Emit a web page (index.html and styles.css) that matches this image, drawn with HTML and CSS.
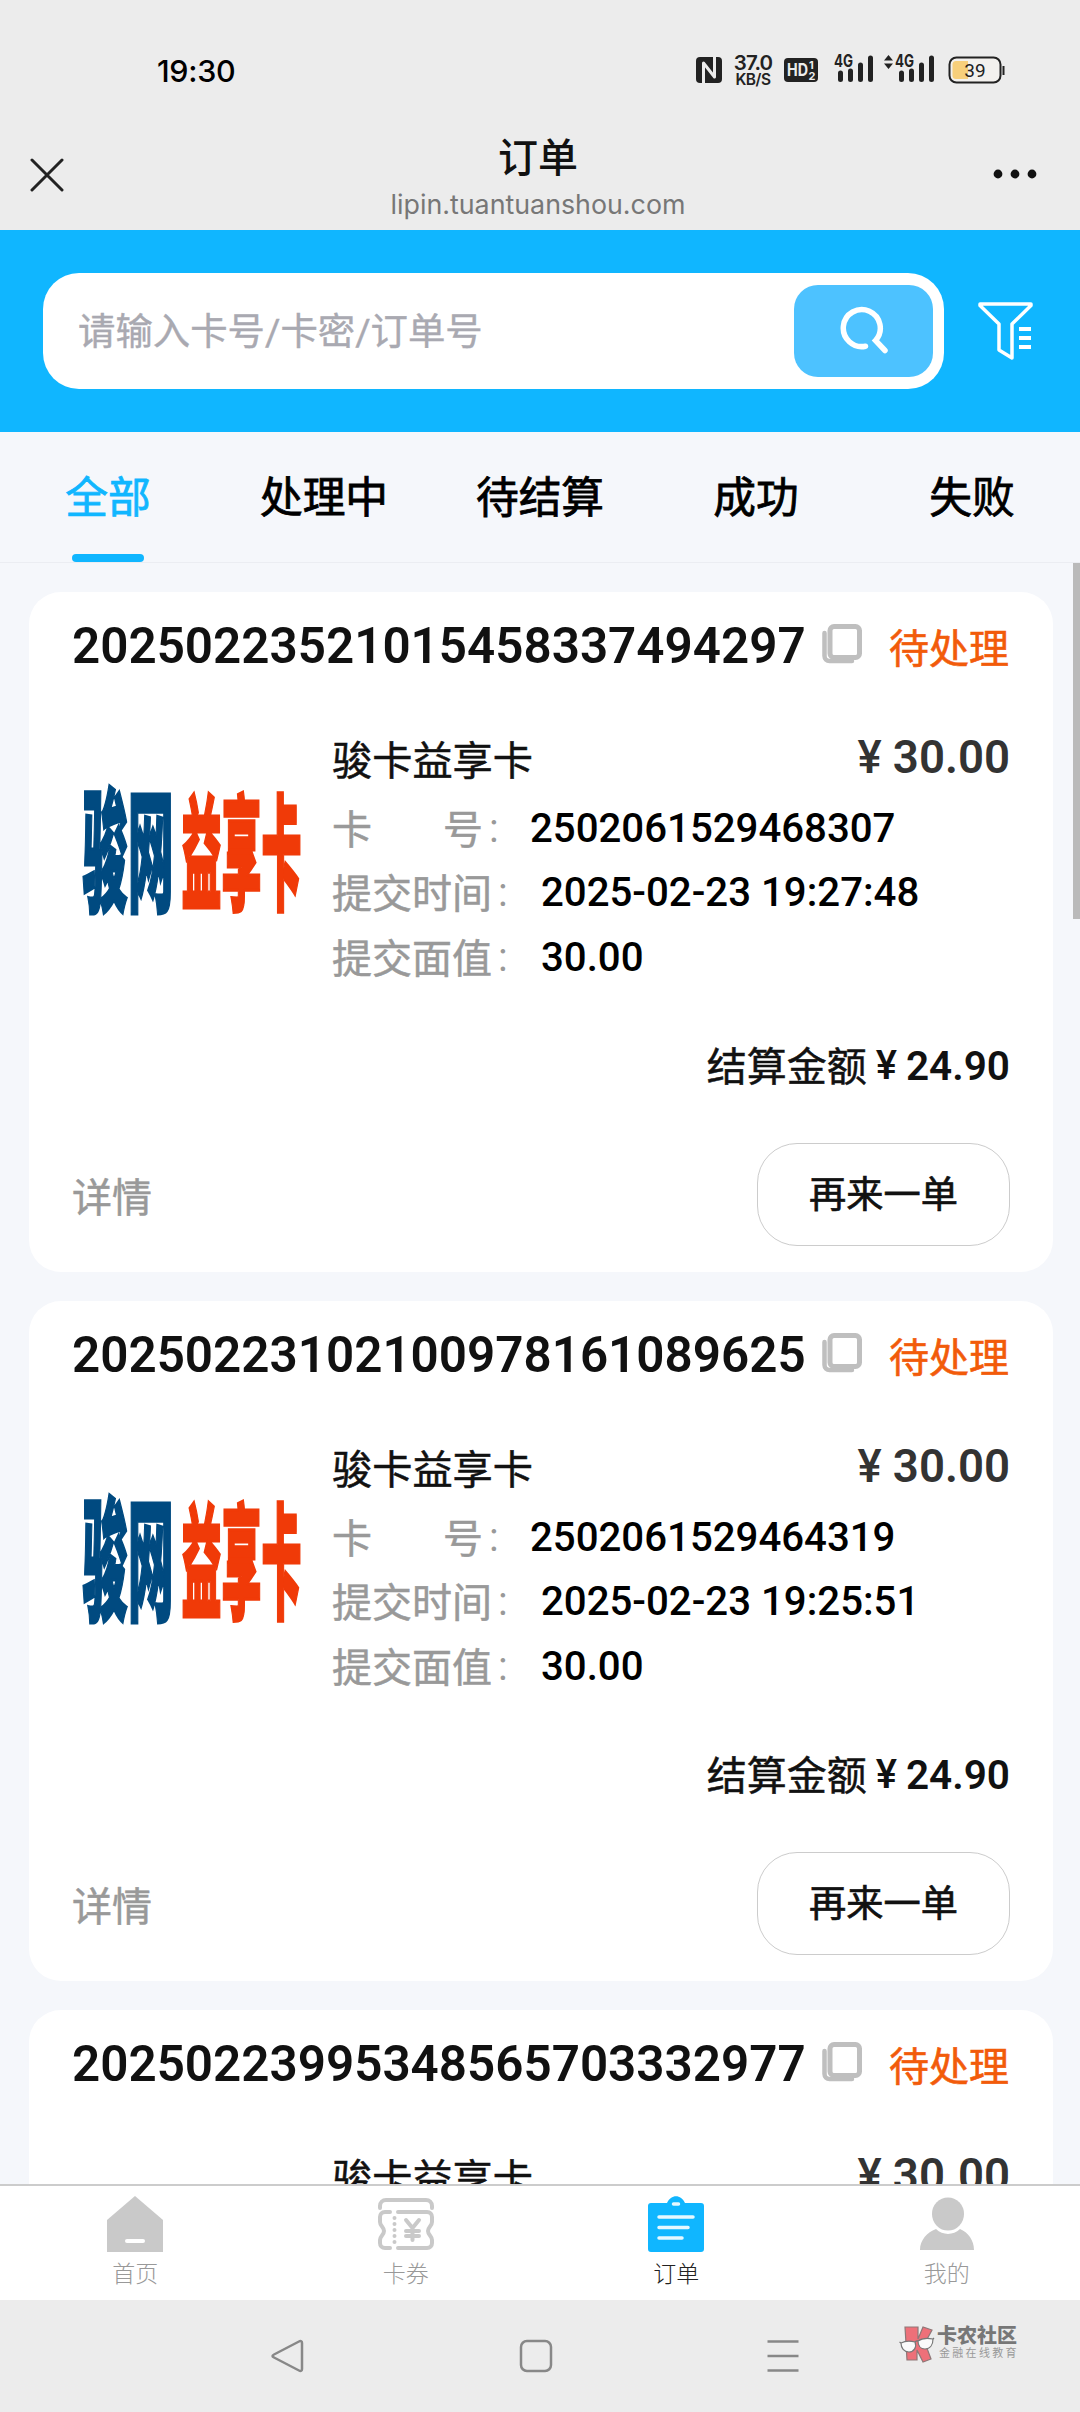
FILE: index.html
```html
<!DOCTYPE html>
<html lang="zh-CN">
<head>
<meta charset="utf-8">
<title>订单</title>
<link rel="stylesheet" href="styles.css">
</head>
<body>
<svg class="defs" aria-hidden="true">
  <symbol id="copy" viewBox="0 0 40 40">
    <rect x="8" y="2.5" width="29.5" height="31" rx="4" fill="none" stroke="#bfbfbf" stroke-width="5"/>
    <path d="M2.5 9v23a5 5 0 0 0 5 5H30" fill="none" stroke="#bfbfbf" stroke-width="4.5" stroke-linecap="round"/>
  </symbol>
  <symbol id="brand" viewBox="0 0 236 160">
    <g class="brand-text">
      <text transform="translate(10.5 129) scale(1 3.02)" textLength="91" lengthAdjust="spacingAndGlyphs" font-size="44" fill="#004a80" stroke="#004a80">骏网</text>
      <text transform="translate(109.500 127.500) scale(1 3.12)" textLength="120" lengthAdjust="spacingAndGlyphs" font-size="40" fill="#f03a08" stroke="#f03a08">益享卡</text>
    </g>
  </symbol>
</svg>
<div class="screen">
  <header class="statusbar">
    <span class="clock">19:30</span>
    <div class="indicators">
      <svg class="ind-nfc" width="28" height="28" viewBox="0 0 28 28"><rect x="1" y="1" width="26" height="26" rx="4" fill="#222"/><path d="M8.500 27V7l11 14V1" fill="none" stroke="#ececec" stroke-width="3" stroke-linejoin="round"/></svg>
      <div class="speed"><b>37.0</b><i>KB/S</i></div>
      <svg class="ind-hd" width="36" height="26" viewBox="0 0 36 26"><rect x="1" y="1" width="34" height="24" rx="4" fill="#222"/><g fill="#ececec" font-weight="700"><text x="4" y="19" font-size="17" textLength="21" lengthAdjust="spacingAndGlyphs">HD</text><text x="26" y="12" font-size="11">1</text><text x="25.500" y="23" font-size="11">2</text></g></svg>
      <svg class="ind-sig" width="42" height="32" viewBox="0 0 42 32"><text x="1" y="15" font-size="17" font-weight="700" textLength="19" lengthAdjust="spacingAndGlyphs" fill="#222">4G</text><g stroke="#222" stroke-width="5" stroke-linecap="round"><path d="M7.500 21v6.500M17.500 19v8.500M27.500 13v14.500M37.500 6v21.500"/></g></svg>
      <svg class="ind-sig2" width="52" height="32" viewBox="0 0 52 32"><path d="M0 8.500l4.500-5.500 4.500 5.500zM0 11.500l4.500 5.500 4.500-5.500z" fill="#222"/><text x="11" y="15" font-size="17" font-weight="700" textLength="19" lengthAdjust="spacingAndGlyphs" fill="#222">4G</text><g stroke="#222" stroke-width="5" stroke-linecap="round"><path d="M17.500 21v6.500M27.500 19v8.500M37.500 13v14.500M47.500 6v21.500"/></g></svg>
      <svg class="ind-bat" width="58" height="28" viewBox="0 0 58 28"><rect x="1.500" y="1.500" width="51" height="25" rx="7" fill="#f3f1ee" stroke="#222" stroke-width="2"/><path d="M8 5h12v18H8a3.500 3.500 0 0 1-3.500-3.500v-11A3.500 3.500 0 0 1 8 5z" fill="#f7cf7b"/><path d="M55.500 10v9" stroke="#222" stroke-width="2"/><text x="27" y="20.500" font-size="19" text-anchor="middle" fill="#222" font-family="Roboto">39</text></svg>
    </div>
  </header>

  <div class="titlebar">
    <svg class="close" width="34" height="34" viewBox="0 0 34 34"><path d="M2 2l30 30M32 2L2 32" stroke="#222" stroke-width="3" stroke-linecap="round"/></svg>
    <div class="page-title"><h1>订单</h1><p>lipin.tuantuanshou.com</p></div>
    <svg class="more" width="44" height="12" viewBox="0 0 44 12" fill="#111"><circle cx="5" cy="6" r="4.400"/><circle cx="22" cy="6" r="4.400"/><circle cx="39" cy="6" r="4.400"/></svg>
  </div>

  <div class="searchbar">
    <div class="searchbox">
      <span class="placeholder">请输入卡号/卡密/订单号</span>
      <div class="search-btn"><svg width="50" height="50" viewBox="0 0 50 50" fill="none" stroke="#fff" stroke-width="5.500" stroke-linecap="round"><path d="M26.500 42.200A18.500 18.500 0 1 1 36.500 36.500l9.500 10"/></svg></div>
    </div>
    <svg class="filter" width="56" height="60" viewBox="0 0 56 60" fill="none" stroke="#fff" stroke-width="3.500" stroke-linejoin="round"><path d="M2 3h51v1.500L34 23v34l-13-8V23L2 4.500z"/><path d="M41 28h12M41 37h12M41 46h12" stroke-width="4"/></svg>
  </div>

  <nav class="tabs">
    <span class="tab active">全部</span><span class="tab">处理中</span><span class="tab">待结算</span><span class="tab">成功</span><span class="tab">失败</span>
  </nav>

  <main class="orders">
    <article class="card">
      <div class="card-head"><h2>20250223521015458337494297</h2><svg class="copy"><use href="#copy"/></svg><span class="state">待处理</span></div>
      <div class="card-body">
        <svg class="brand"><use href="#brand"/></svg>
        <div class="info">
          <div class="product"><span>骏卡益享卡</span><strong class="price"><span class="yen">¥</span>30.00</strong></div>
          <div class="field"><span class="label split"><span>卡</span><span>号</span></span><span class="colon">:</span><span class="value">2502061529468307</span></div>
          <div class="field"><span class="label">提交时间</span><span class="colon">:</span><span class="value">2025-02-23 19:27:48</span></div>
          <div class="field"><span class="label">提交面值</span><span class="colon">:</span><span class="value">30.00</span></div>
        </div>
      </div>
      <div class="settle"><span>结算金额</span><span class="yen">¥</span><b>24.90</b></div>
      <div class="card-foot"><span class="detail">详情</span><span class="again">再来一单</span></div>
    </article>
    <article class="card">
      <div class="card-head"><h2>20250223102100978161089625</h2><svg class="copy"><use href="#copy"/></svg><span class="state">待处理</span></div>
      <div class="card-body">
        <svg class="brand"><use href="#brand"/></svg>
        <div class="info">
          <div class="product"><span>骏卡益享卡</span><strong class="price"><span class="yen">¥</span>30.00</strong></div>
          <div class="field"><span class="label split"><span>卡</span><span>号</span></span><span class="colon">:</span><span class="value">2502061529464319</span></div>
          <div class="field"><span class="label">提交时间</span><span class="colon">:</span><span class="value">2025-02-23 19:25:51</span></div>
          <div class="field"><span class="label">提交面值</span><span class="colon">:</span><span class="value">30.00</span></div>
        </div>
      </div>
      <div class="settle"><span>结算金额</span><span class="yen">¥</span><b>24.90</b></div>
      <div class="card-foot"><span class="detail">详情</span><span class="again">再来一单</span></div>
    </article>
    <article class="card">
      <div class="card-head"><h2>20250223995348565703332977</h2><svg class="copy"><use href="#copy"/></svg><span class="state">待处理</span></div>
      <div class="card-body">
        <div class="brand"></div>
        <div class="info">
          <div class="product"><span>骏卡益享卡</span><strong class="price"><span class="yen">¥</span>30.00</strong></div>
        </div>
      </div>
    </article>
    <div class="scrollbar"></div>
  </main>

  <nav class="tabbar">
    <div class="item"><svg width="58" height="58" viewBox="0 0 58 58"><path d="M29 1l28 24v32H1V25z" fill="#c9c9c9"/><path d="M21 46h16" stroke="#fff" stroke-width="4" stroke-linecap="round"/></svg><span>首页</span></div>
    <div class="item"><svg width="58" height="58" viewBox="0 0 58 58" fill="none" stroke="#c9c9c9" stroke-width="4" stroke-linecap="round" stroke-linejoin="round"><path d="M3 13V11a6 6 0 0 1 6-6h40a6 6 0 0 1 6 6v2"/><path d="M13 17H8c-3 0-5 2-5 5v5c0 4 4 5 4 9s-4 5-4 9v3c0 3 2 5 5 5h5M21 17h29c3 0 5 2 5 5v5c0 4-4 5-4 9s4 5 4 9v3c0 3-2 5-5 5H21"/><path d="M17.500 23v.1M17.500 29v.1M17.500 35v.1M17.500 41v.1M17.500 47v.1M29 25l6.500 8 6.500-8M35.500 34v11M29 36h13M29 41h13"/></svg><span>卡券</span></div>
    <div class="item on"><svg width="58" height="58" viewBox="0 0 58 58"><path d="M4 8h16c4-9 14-9 18 0h16a3 3 0 0 1 3 3v43a3 3 0 0 1-3 3H4a3 3 0 0 1-3-3V11a3 3 0 0 1 3-3z" fill="#10b6ff"/><path d="M26.500 9h5M12 22h34M12 32.500h29M12 43h23" stroke="#e6f8ff" stroke-width="3.500" stroke-linecap="round"/></svg><span>订单</span></div>
    <div class="item"><svg width="58" height="58" viewBox="0 0 58 58" fill="#c9c9c9"><ellipse cx="30" cy="19" rx="16" ry="16.500"/><path d="M18 34c7 6.500 17 6.500 24 0 8 3.500 14 11 14 21H2c0-10 7-17.500 16-21z"/></svg><span>我的</span></div>
  </nav>

  <footer class="sysnav">
    <svg class="sys back" width="34" height="34" viewBox="0 0 34 34"><path d="M29 2.500c2-1 3 0 3 1.500v26c0 1.500-1 2.500-3 1.500L4 18.500c-2-1-2-2 0-3z"/></svg>
    <svg class="sys home" width="34" height="34" viewBox="0 0 34 34"><rect x="2" y="2" width="30" height="30" rx="6"/></svg>
    <svg class="sys menu" width="34" height="34" viewBox="0 0 34 34"><path d="M1.500 2.500h31M1.500 17h31M1.500 31.500h31"/></svg>
    <div class="mark">
      <svg width="36" height="38" viewBox="0 0 36 38"><path d="M6 2h13v12l5-12 9 3-7 13 6 16-8 3-6-12v10H8z" fill="#ee7079" stroke="#8f7777" stroke-width="1.200"/><g fill="#fafafa" stroke="#777" stroke-width="1.200"><path d="M2 18c4-2 10-2 14-1 2 5-1 10-6 10s-8-4-8-9z"/><path d="M19 16c4-3 10-3 15-2 0 6-3 10-8 10s-7-4-7-8z"/><path d="M16 17q1.500-1.500 3-1M2 18l-1.500-1M34 14l1-1" fill="none"/></g></svg>
      <div class="mark-text"><b>卡农社区</b><span>金融在线教育</span></div>
    </div>
  </footer>
</div>
</body>
</html>
```
FILE: styles.css
```css
* { box-sizing: border-box; margin: 0; padding: 0; }
body { width: 1080px; height: 2412px; overflow: hidden; background: #ececec; font-family: Roboto, "Noto Sans CJK SC", sans-serif; color: #000; }
svg { display: block; flex: none; }
.defs { position: absolute; width: 0; height: 0; }
.screen { display: flex; flex-direction: column; width: 1080px; height: 2412px; white-space: nowrap; }

.statusbar { height: 118px; padding: 22px 74px 0 157px; display: flex; align-items: center; justify-content: space-between; font-family: Inter, sans-serif; }
.clock { font-size: 30.5px; font-weight: 500; letter-spacing: -0.3px; }
.indicators { display: flex; align-items: center; color: #222; }
.speed { width: 38px; margin: 2px 11px 0 11px; display: flex; flex-direction: column; align-items: center; line-height: 17px; }
.speed b { font-size: 20.5px; font-weight: 600; letter-spacing: -0.8px; }
.speed i { font-size: 15.5px; font-weight: 600; font-style: normal; letter-spacing: -0.5px; }
.ind-hd { margin-right: 14px; }
.ind-sig, .ind-sig2 { margin-top: -5px; }
.ind-sig2 { margin: -5px 12px 0 9px; }

.titlebar { height: 112px; padding: 0 43px 0 30px; display: flex; align-items: flex-start; justify-content: space-between; }
.close { margin-top: 40px; }
.more { margin-top: 50px; }
.page-title { text-align: center; margin-left: 19px; }
.page-title h1 { font-size: 40px; line-height: 58px; font-weight: 500; margin-top: 12px; color: #111; }
.page-title p { font-family: Inter, sans-serif; font-size: 26.8px; line-height: 32px; color: #777; }

.searchbar { height: 202px; background: #10b6ff; padding: 0 46px 0 43px; display: flex; align-items: center; justify-content: space-between; }
.searchbox { width: 901px; height: 116px; border-radius: 36px; background: #fff; padding: 0 11px 0 35px; display: flex; align-items: center; justify-content: space-between; }
.placeholder { font-size: 37.4px; color: #a9a9b1; padding-bottom: 4px; -webkit-text-stroke: .4px; }
.search-btn { width: 139px; height: 92px; border-radius: 24px; background: #4dc2ff; display: flex; align-items: center; justify-content: center; padding-bottom: 4px; }

.tabs { height: 131px; background: #f5f7fb; border-bottom: 1px solid #ebedf2; display: grid; grid-template-columns: repeat(5, 1fr); }
.tab { display: flex; flex-direction: column; align-items: center; justify-content: space-between; padding-top: 35px; font-size: 42.7px; line-height: 62px; -webkit-text-stroke: .8px; }
.tab.active { color: #10b6ff; }
.tab.active::after { content: ""; width: 72px; height: 8px; border-radius: 4px; background: #10b6ff; }

.orders { position: relative; height: 1621px; overflow: hidden; background: #f5f7fb; padding: 29px 27px 0 29px; display: flex; flex-direction: column; gap: 29px; }
.card { flex: none; width: 1024px; height: 680px; border-radius: 32px; background: #fff; padding: 0 43px 0 43px; }
.card-head { height: 106px; display: flex; align-items: center; }
.card-head h2 { font-size: 49.4px; font-weight: 600; color: #111; width: 730px; padding-top: 1px; }
.copy { width: 40px; height: 40px; margin: -2px 27px 0 20px; }
.state { font-size: 40px; color: #f25b0a; -webkit-text-stroke: .6px; padding-top: 1px; }
.card-body { display: flex; height: 314px; padding-top: 29px; }
.brand { width: 236px; height: 160px; margin: 45px 24px 0 0; }
.brand-text { font-family: "Noto Sans CJK SC", sans-serif; font-weight: 900; stroke-width: 1; }
.info { flex: 1; }
.product { height: 69px; display: flex; align-items: center; justify-content: space-between; font-size: 40.2px; color: #111; padding-bottom: 8px; -webkit-text-stroke: .5px; }
.price { font-size: 45.6px; font-weight: 600; color: #333; -webkit-text-stroke: 0; }
.yen { font-weight: 500; margin-right: 11px; }
.field { height: 64.5px; display: flex; align-items: center; font-size: 40.2px; }
.label { color: #999; width: 160px; padding-bottom: 3px; font-size: 40px; -webkit-text-stroke: .5px; }
.split { width: 151px; display: flex; justify-content: space-between; }
.colon { width: 49px; padding-left: 6px; color: #999; }
.split + .colon { width: 47px; }
.value { font-weight: 500; }
.settle { height: 103px; display: flex; align-items: center; justify-content: flex-end; font-size: 40px; color: #111; }
.settle span:first-child { -webkit-text-stroke: .5px; padding-bottom: 3px; }
.settle .yen { margin: 0 9px; }
.settle b { font-size: 40.5px; font-weight: 600; }
.card-foot { height: 152px; padding-top: 7px; display: flex; align-items: center; justify-content: space-between; }
.detail { font-size: 40px; color: #999; -webkit-text-stroke: .5px; }
.again { width: 253px; height: 103px; border: 1px solid #ccc; border-radius: 40px; display: flex; align-items: center; justify-content: center; font-size: 37.2px; color: #111; -webkit-text-stroke: .7px; padding-bottom: 5px; }
.card-body + .settle { padding-top: 4px; }
.scrollbar { position: absolute; right: 0; top: 0; width: 7px; height: 356px; background: #bababa; }

.tabbar { height: 116px; background: #fff; border-top: 2px solid #ccc; display: grid; grid-template-columns: repeat(4, 270.500px); }
.item { display: flex; flex-direction: column; align-items: center; padding-top: 9px; font-size: 23px; color: #999; line-height: 34px; gap: 5px; font-weight: 300; }
.on { color: #222; }

.sysnav { height: 112px; background: #ececec; display: flex; align-items: flex-start; padding: 39px 0 0 270px; }
.sys { fill: none; stroke: #888; stroke-width: 2.5; }
.home { margin-left: 215px; }
.menu { margin-left: 213px; }
.mark { display: flex; margin: -14px 0 0 99px; }
.mark-text { display: flex; flex-direction: column; margin-left: 2px; color: #777; }
.mark-text b { font-size: 20px; line-height: 22px; font-weight: 900; }
.mark-text span { font-size: 11px; line-height: 14px; letter-spacing: 2.3px; margin-left: 2px; color: #999; }
```
